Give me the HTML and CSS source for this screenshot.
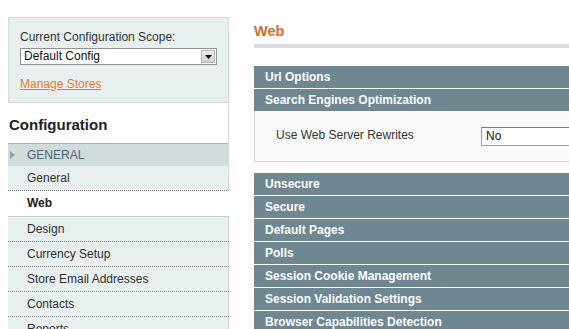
FILE: index.html
```html
<!DOCTYPE html>
<html>
<head>
<meta charset="utf-8">
<link rel="stylesheet" href="styles.css">
</head>
<body>
<div class="page">
  <aside class="side">
    <div class="scope">
      <div class="scope-label">Current Configuration Scope:</div>
      <div class="select">
        <span class="select-value">Default Config</span>
        <span class="select-btn"><svg width="7" height="4" viewBox="0 0 7 4"><path d="M0 0H7L3.5 4Z" fill="#111"/></svg></span>
      </div>
      <a class="manage" href="#">Manage Stores</a>
    </div>
    <h3 class="side-title">Configuration</h3>
    <div class="group-title"><span class="arrow"></span>GENERAL</div>
    <ul class="tabs">
      <li class="tab">General</li>
      <li class="tab active">Web</li>
    </ul>
    <ul class="tabs tabs-next">
      <li class="tab">Design</li>
      <li class="tab">Currency Setup</li>
      <li class="tab">Store Email Addresses</li>
      <li class="tab">Contacts</li>
      <li class="tab">Reports</li>
    </ul>
  </aside>
  <main class="content">
    <h3 class="title">Web</h3>
    <div class="rule"></div>
    <div class="bar">Url Options</div>
    <div class="bar bar-open">Search Engines Optimization</div>
    <div class="fieldset">
      <span class="label">Use Web Server Rewrites</span>
      <div class="input">No</div>
    </div>
    <div class="bars">
      <div class="bar">Unsecure</div>
      <div class="bar">Secure</div>
      <div class="bar">Default Pages</div>
      <div class="bar">Polls</div>
      <div class="bar">Session Cookie Management</div>
      <div class="bar">Session Validation Settings</div>
      <div class="bar">Browser Capabilities Detection</div>
    </div>
  </main>
</div>
</body>
</html>
```
FILE: styles.css
```css
html, body {
  margin: 0;
  padding: 0;
  background: #fff;
  overflow: hidden;
}
body {
  font-family: "Liberation Sans", Arial, sans-serif;
  font-size: 12px;
  color: #2f2f2f;
}
.page {
  display: flex;
  align-items: flex-start;
  gap: 25px;
  padding: 17px 0 0 8px;
  width: 900px;
}
.side {
  flex: 0 0 221px;
  width: 221px;
}
.scope {
  background: #e7efef;
  border: 1px solid #d6dcdc;
  padding: 12px 11px 12px 11px;
  height: 60px;
}
.scope-label {
  line-height: 15px;
  color: #333;
}
.select {
  margin-top: 3px;
  height: 15px;
  width: 195px;
  border: 1px solid #8f9396;
  background: #fff;
  display: flex;
  align-items: center;
  justify-content: space-between;
}
.select-value {
  padding-left: 3px;
  color: #111;
  line-height: 15px;
}
.select-btn {
  width: 14px;
  height: 13px;
  margin-right: 1px;
  background: linear-gradient(#ebebeb, #d2d2d2);
  border: 1px solid #b9b9b9;
  box-sizing: border-box;
  display: flex;
  align-items: center;
  justify-content: center;
}
.manage {
  display: block;
  margin-top: 12px;
  line-height: 15px;
  color: #ea7d23;
  text-decoration: underline;
}
.side-title {
  margin: 0;
  font-size: 15px;
  line-height: 18px;
  font-weight: bold;
  color: #222;
  padding: 13px 0 9px 1px;
  border-right: 1px solid #d3d3d3;
  background: #fff;
}
.group-title {
  height: 22px;
  line-height: 23px;
  border-top: 1px solid #aab4b5;
  background: #d1dcdc;
  color: #4a6875;
  padding-left: 19px;
  position: relative;
  border-right: 1px solid #d3d3d3;
}
.arrow {
  position: absolute;
  left: 2px;
  top: 7px;
  width: 0;
  height: 0;
  border-top: 4px solid transparent;
  border-bottom: 4px solid transparent;
  border-left: 5px solid #8fa2a6;
}
.tabs {
  list-style: none;
  margin: 0;
  padding: 0;
}
.tab {
  height: 24px;
  line-height: 24px;
  padding-left: 19px;
  background: #e7efef;
  border-bottom: 1px dotted #7f7f7f;
  border-right: 1px solid #d3d3d3;
  color: #2f2f2f;
}
.tab.active {
  background: #fff;
  font-weight: bold;
  color: #222;
  border-bottom: none;
  border-right: 1px solid #fff;
  height: 25px;
}
.tabs-next {
  border-top: 1px solid #c9cfcf;
}
.content {
  flex: 0 0 620px;
  width: 620px;
}
.title {
  margin: 5px 0 0 0;
  font-size: 14.5px;
  line-height: 18px;
  font-weight: bold;
  color: #dd6a26;
}
.rule {
  margin-top: 4px;
  height: 4px;
  background: #dddddd;
}
.bar {
  height: 22px;
  line-height: 22px;
  background: #6e8790;
  color: #fff;
  font-weight: bold;
  padding-left: 11px;
  margin-bottom: 1px;
}
.rule + .bar {
  margin-top: 18px;
}
.bar-open {
  margin-bottom: 0;
}
.fieldset {
  height: 50px;
  background: #fafafa;
  border: 1px solid #d6d6d6;
  border-top: none;
  display: flex;
  align-items: center;
  padding-left: 21px;
  margin-bottom: 11px;
}
.label {
  width: 205px;
  color: #333;
  margin-top: -3px;
}
.input {
  width: 200px;
  height: 17px;
  line-height: 17px;
  border: 1px solid #a0a0a0;
  border-top-color: #7c7c7c;
  background: #fff;
  padding-left: 4px;
  color: #111;
}
```
